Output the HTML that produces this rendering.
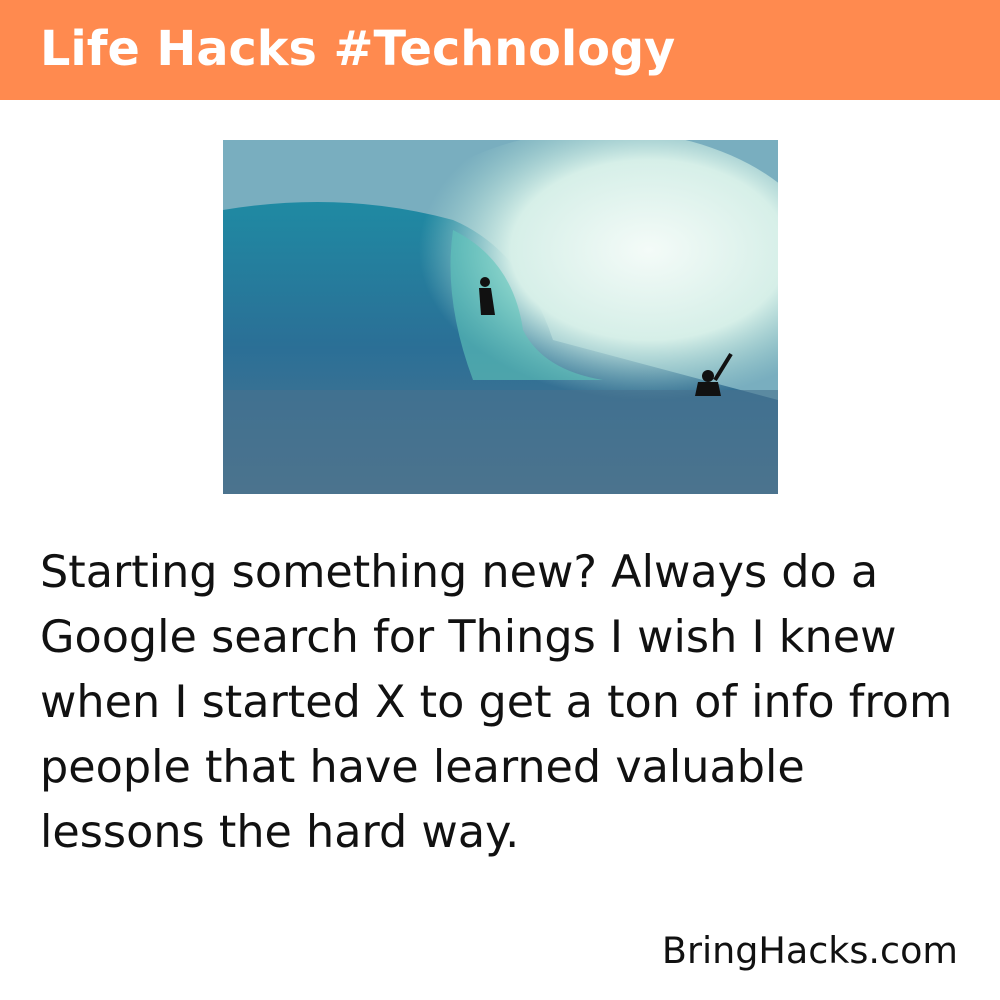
<!DOCTYPE html>
<html><head><meta charset="utf-8"><style>
body{margin:0;width:1000px;height:1000px;background:#fff;position:relative;overflow:hidden;font-family:"DejaVu Sans","Liberation Sans",sans-serif;}
.hdr{position:absolute;left:0;top:0;width:1000px;height:100px;background:#FF8A4F;}
.hdr span{position:absolute;left:40px;top:22px;color:#fff;font-size:47.7px;font-weight:bold;white-space:nowrap}
.img{position:absolute;left:223px;top:140px;width:555px;height:354px;overflow:hidden;}
.txt{position:absolute;left:40px;top:540px;font-size:44.5px;line-height:65px;color:#111;white-space:nowrap}
.ft{position:absolute;right:42px;top:929px;font-size:36.5px;color:#111;white-space:nowrap}
</style></head><body>
<div class="hdr"><span>Life Hacks #Technology</span></div>
<div class="img">
<svg width="555" height="354" viewBox="0 0 555 354">
<defs>
<radialGradient id="w" cx="0.6" cy="0.4" r="0.5"><stop offset="0" stop-color="#f4fbf8"/><stop offset="0.6" stop-color="#d6efe8"/><stop offset="1" stop-color="#a8d8d0" stop-opacity="0"/></radialGradient>
<linearGradient id="sea" x1="0" y1="0" x2="0" y2="1"><stop offset="0" stop-color="#1f8aa3"/><stop offset="0.5" stop-color="#2b6f96"/><stop offset="1" stop-color="#52768f"/></linearGradient>
</defs>
<rect width="555" height="354" fill="#79aebf"/>
<path d="M0 70 Q120 50 230 80 Q300 110 330 200 L555 260 L555 354 L0 354Z" fill="url(#sea)"/>
<ellipse cx="380" cy="140" rx="230" ry="150" fill="url(#w)"/>
<path d="M230 90 Q290 120 300 190 Q320 230 380 240 L250 240 Q220 160 230 90Z" fill="#5fc7bb" opacity="0.6"/>
<rect x="0" y="250" width="555" height="104" fill="#47718e" opacity="0.6"/>
<circle cx="262" cy="142" r="5" fill="#111"/><path d="M256 148 L268 148 L272 175 L258 175Z" fill="#111"/>
<circle cx="485" cy="236" r="6" fill="#111"/><path d="M475 242 L495 242 L498 256 L472 256Z" fill="#111"/><path d="M492 240 L508 214" stroke="#111" stroke-width="4"/>
</svg></div>
<div class="txt">Starting something new? Always do a<br>Google search for Things I wish I knew<br>when I started X to get a ton of info from<br>people that have learned valuable<br>lessons the hard way.</div>
<div class="ft">BringHacks.com</div>
</body></html>
